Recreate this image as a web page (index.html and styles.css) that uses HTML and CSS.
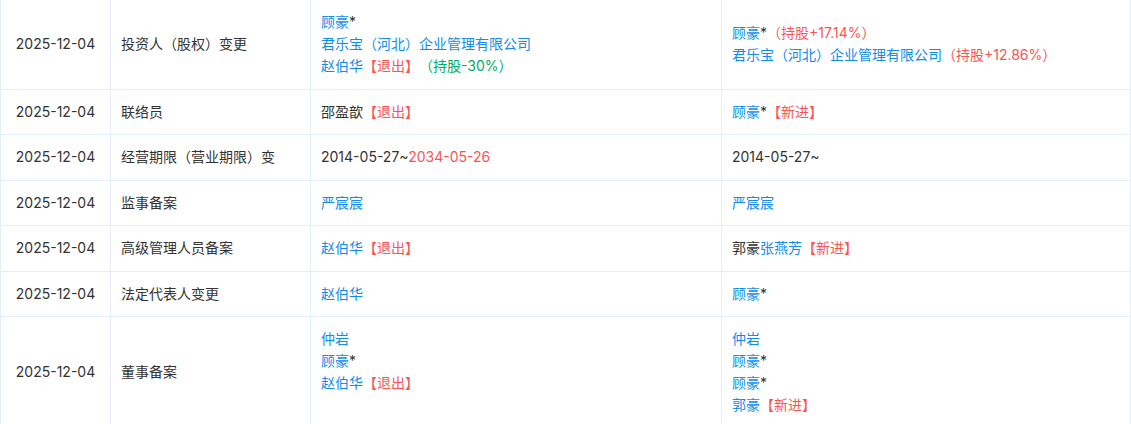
FILE: index.html
```html
<!DOCTYPE html>
<html lang="zh-CN">
<head>
<meta charset="utf-8">
<title>变更记录</title>
<link rel="stylesheet" href="styles.css">
</head>
<body>
<table class="change-table">
  <colgroup>
    <col class="c-date">
    <col class="c-type">
    <col class="c-before">
    <col class="c-after">
  </colgroup>
  <tbody>
    <tr>
      <td class="date">2025-12-04</td>
      <td class="type">投资人（股权）变更</td>
      <td>
        <div><span class="link">顾豪</span>*</div>
        <div><span class="link">君乐宝（河北）企业管理有限公司</span></div>
        <div><span class="link">赵伯华</span><span class="red">【退出】</span><span class="green">（持股-30%）</span></div>
      </td>
      <td>
        <div><span class="link">顾豪</span>*<span class="red">（持股+17.14%）</span></div>
        <div><span class="link">君乐宝（河北）企业管理有限公司</span><span class="red">（持股+12.86%）</span></div>
      </td>
    </tr>
    <tr>
      <td class="date">2025-12-04</td>
      <td class="type">联络员</td>
      <td><div>邵盈歆<span class="red">【退出】</span></div></td>
      <td><div><span class="link">顾豪</span>*<span class="red">【新进】</span></div></td>
    </tr>
    <tr>
      <td class="date">2025-12-04</td>
      <td class="type">经营期限（营业期限）变</td>
      <td><div>2014-05-27~<span class="red">2034-05-26</span></div></td>
      <td><div>2014-05-27~</div></td>
    </tr>
    <tr>
      <td class="date">2025-12-04</td>
      <td class="type">监事备案</td>
      <td><div><span class="link">严宸宸</span></div></td>
      <td><div><span class="link">严宸宸</span></div></td>
    </tr>
    <tr>
      <td class="date">2025-12-04</td>
      <td class="type">高级管理人员备案</td>
      <td><div><span class="link">赵伯华</span><span class="red">【退出】</span></div></td>
      <td><div>郭豪<span class="link">张燕芳</span><span class="red">【新进】</span></div></td>
    </tr>
    <tr>
      <td class="date">2025-12-04</td>
      <td class="type">法定代表人变更</td>
      <td><div><span class="link">赵伯华</span></div></td>
      <td><div><span class="link">顾豪</span>*</div></td>
    </tr>
    <tr>
      <td class="date">2025-12-04</td>
      <td class="type">董事备案</td>
      <td>
        <div><span class="link">仲岩</span></div>
        <div><span class="link">顾豪</span>*</div>
        <div><span class="link">赵伯华</span><span class="red">【退出】</span></div>
        <div>&nbsp;</div>
      </td>
      <td>
        <div><span class="link">仲岩</span></div>
        <div><span class="link">顾豪</span>*</div>
        <div><span class="link">顾豪</span>*</div>
        <div><span class="link">郭豪</span><span class="red">【新进】</span></div>
      </td>
    </tr>
  </tbody>
</table>
</body>
</html>
```

FILE: styles.css
```css
html, body {
  margin: 0;
  padding: 0;
  background: #ffffff;
}

body {
  font-family: Inter, "Noto Sans CJK SC", sans-serif;
  font-size: 14px;
  color: #333333;
  text-spacing-trim: space-all;
}

.change-table {
  width: 1131px;
  border-collapse: separate;
  border-spacing: 0;
  table-layout: fixed;
  border-left: 1px solid #e4eef6;
}

.c-date { width: 110px; }
.c-type { width: 200px; }
.c-before { width: 411px; }
.c-after { width: 409px; }

.change-table td {
  padding: 11.25px 10px;
  line-height: 22px;
  vertical-align: middle;
  border-right: 1px solid #e4eef6;
  border-bottom: 1px solid #e4eef6;
  white-space: nowrap;
  overflow: hidden;
}

.change-table td.date {
  text-align: center;
  padding-left: 0;
  padding-right: 0;
}

.link { color: #128bed; }
.red { color: #fa5555; }
.green { color: #00ad65; }
```
